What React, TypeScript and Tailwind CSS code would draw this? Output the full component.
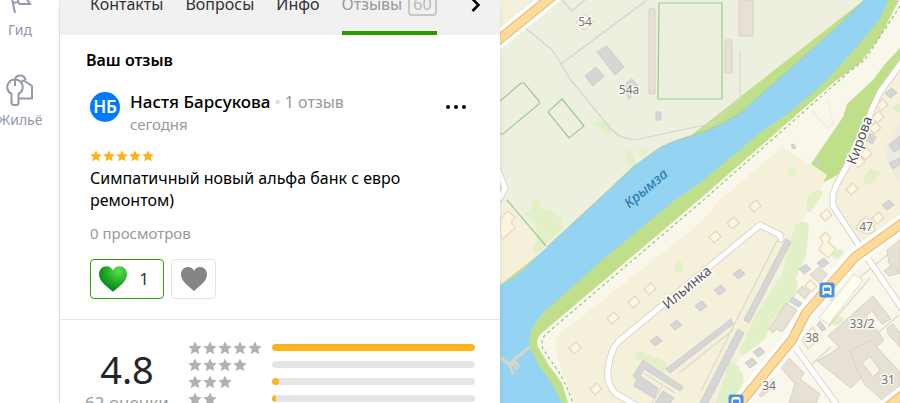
import React, { useState } from 'react';

const STAR_PATH = 'M12 1l3.500 7.200 8 .9-6 5.400 1.800 8.100L12 18.400l-7.300 4.200 1.800-8.100-6-5.400 8-.9z';
const HEART_PATH =
  'M15 26C11 22 2 17 2 9.500C2 5 5 2 9 2C11.800 2 14 3.600 15 6C16 3.600 18.200 2 21 2C25 2 28 5 28 9.500C28 17 19 22 15 26Z';

const tabs = [
  { label: 'Контакты' },
  { label: 'Вопросы' },
  { label: 'Инфо' },
  { label: 'Отзывы', count: 60 },
];

const ratings = [
  { stars: 5, share: 100 },
  { stars: 4, share: 0 },
  { stars: 3, share: 3.4 },
  { stars: 2, share: 2 },
];

const houses = [
  [150, 289], [134, 302], [113, 318], [75, 348], [96, 389],
  [215, 237], [233, 223], [255, 206], [352, 189], [326, 215],
  [382, 105], [378, 117], [375, 128], [366, 154], [359, 162], [378, 218],
];

const greySheds = [
  [239, 274], [220, 290], [201, 306], [176, 325], [156, 341],
  [305, 269], [323, 263], [391, 93], [388, 205], [251, 363], [259, 352],
];

const houseNumbers = [
  { text: '54', x: 85, y: 26 },
  { text: '54а', x: 129, y: 94 },
  { text: '47', x: 366, y: 231 },
  { text: '33/2', x: 362, y: 328 },
  { text: '38', x: 312, y: 342 },
  { text: '34', x: 269, y: 390 },
  { text: '31', x: 388, y: 384 },
];

const Stars: React.FC<{ count: number; className: string }> = ({ count, className }) => (
  <>
    {Array.from({ length: count }, (_, i) => (
      <svg key={i} viewBox="0 0 24 24" className={className} fill="currentColor" aria-hidden="true">
        <path d={STAR_PATH} />
      </svg>
    ))}
  </>
);

const Sidebar: React.FC = () => (
  <nav className="w-[60px] shrink-0 border-r border-[#ececec] bg-white text-[#9399ab]">
    <a href="#guide" className="flex w-10 flex-col items-center">
      <svg viewBox="0 0 32 16" className="h-4 w-8" fill="none" stroke="currentColor" strokeWidth="2" aria-hidden="true">
        <path d="M8 -1L11 13M9 3L14 2L16 4H26L22 -2M14 2V-2" />
      </svg>
      <span className="mt-1 text-sm leading-5">Гид</span>
    </a>
    <a href="#housing" className="mt-8 flex w-10 flex-col items-center">
      <svg viewBox="0 0 32 36" className="h-9 w-8" fill="none" stroke="currentColor" strokeWidth="2" strokeLinejoin="round" aria-hidden="true">
        <path d="M7.500 22A7.700 7.700 0 1 1 14.500 22V31Q14.500 33 12.500 33H10.500Q7.500 33 7.500 31ZM11 8V14M11 7A5.500 5.500 0 0 1 21.500 8M16 10.500L20 8.500L28 14V26.500H15" />
      </svg>
      <span className="text-sm leading-6">Жильё</span>
    </a>
  </nav>
);

const BusStop: React.FC<{ x: number; y: number }> = ({ x, y }) => (
  <g transform={`translate(${x} ${y})`}>
    <rect x="-7.500" y="-7.500" width="15" height="15" rx="3" fill="#4a90e2" />
    <path d="M-4.500 5V-2Q-4.500 -5 -2 -5H2Q4.500 -5 4.500 -2V5H2.500V3.500H-2.500V5Z" fill="#fff" />
    <path d="M-3 -2.500H3V1H-3Z" fill="#4a90e2" />
  </g>
);

const CityMap: React.FC = () => (
  <svg
    viewBox="0 0 400 403"
    preserveAspectRatio="xMinYMin slice"
    className="h-full w-full"
    role="img"
    aria-label="Карта"
    fontFamily="'Noto Sans', sans-serif"
  >
    <rect width="400" height="403" fill="#f9f7ea" />

    {/* park on the north bank */}
    <path d="M0 0H364L340 24L300 60L240 113L217 126L200 133L155 151L133 167L98 200L47 247L28 265L0 285Z" fill="#edf0df" />
    <path d="M0 0H30L0 28ZM0 197L8 203L47 247L28 265Q12 281 0 285Z" fill="#f5f0d9" />

    {/* residential blocks */}
    <path d="M282 147L327 175L323 183L313 200L297 230L270 300L243 353L230 373L217 403H75Q60 370 55 347Q54 339 60 334L200 223L220 200Z" fill="#f5f0d9" />
    <path d="M400 67L380 92L372 112L335 190V202L362 246L400 219Z" fill="#f5f0d9" />
    <path d="M400 123L388 145L385 153L392 172L400 182Z" fill="#edebdf" />

    {/* greenery */}
    <g fill="#e1f0c6">
      <path d="M94 124Q94 121 103 120Q113 123 111 133Q107 139 103 129Q94 128 94 124ZM126 153Q129 147 133 153L136 164L133 169Q127 164 126 153Z" />
      <circle cx="143" cy="152" r="4" />
      <path d="M32 200H40L41 209Q66 212 62 230Q48 240 43 248Q32 258 33 247Q41 237 34 222L24 214Q35 209 32 200Z" />
      <ellipse cx="179" cy="267" rx="4" ry="6" />
      <ellipse cx="292" cy="172" rx="4" ry="5" />
      <path d="M307 200Q308 192 317 190Q326 191 321 197L311 212H307Z" />
      <path d="M135 356Q138 347 152 357Q165 356 166 367Q167 374 160 370L145 360Q135 361 135 356Z" />
      <path d="M296 224Q304 220 309 224L308 239L306 255L296 278Q301 293 290 302L273 319L265 339Q250 351 242 356Q237 351 244 342L255 316L268 296L282 273L289 246Z" />
      <path d="M229 362Q238 362 240 370Q247 377 241 388L228 403H216Z" />
      <path d="M331 254Q341 246 344 251Q341 260 334 259ZM332 320Q343 313 344 319Q338 327 332 325Z" />
      <path d="M363 178L370 169Q378 169 380 175Q375 177 373 183Q365 188 363 178ZM392 107Q398 102 400 104V112Q394 113 392 107Z" />
    </g>
    <path d="M364 0H399L380 37L360 63L333 83L200 199L43 332Q35 338 38 347L50 367L62 383L68 403H0V285Z" fill="#c0df8a" />
    <path d="M400 48L385 64L373 80L347 104L343 117L311 164L327 175L323 183L339 174L372 105L400 65Z" fill="#c0df8a" />

    {/* river */}
    <path
      d="M364 0L340 24L300 60L240 113Q225 124 200 133Q165 143 155 151L133 167L98 200L47 247L28 265Q12 281 0 285V403H62Q53 383 40 367L30 347Q27 336 37 320Q45 310 60 298L100 262L175 200L200 183L260 133L290 112L325 82L360 43L380 19L388 0Z"
      fill="#95d3f3"
    />
    <path d="M364 0L340 24L300 60L240 113Q225 124 200 133Q165 143 155 151L133 167L98 200L47 247" fill="none" stroke="#a8cf9b" strokeWidth="1" />
    <path d="M0 357L9 364L30 347M9 364L13 374M12 363L17 370M15 361L19 367" fill="none" stroke="#d8d5c8" strokeWidth="3" />

    {/* embankment walk */}
    <path d="M400 6L366 58Q360 64 350 71L200 203L46 334Q40 340 43 349L60 374L68 390L73 403" fill="none" stroke="#8dc389" strokeWidth="1.200" strokeDasharray="3 3" />

    {/* sports grounds and paths */}
    <g fill="none" stroke="#9acb90" strokeWidth="1.200">
      <path d="M159 3H222V99H158ZM0 101L21 83H24L39 101V104L3 134H0M62 99L84 126L69 138L48 112ZM7 200L46 246" />
    </g>
    <g fill="none" stroke="#d5d5d0" strokeWidth="1.200">
      <path d="M24 27L50 48Q55 53 61 64L70 79L110 128Q123 142 139 139L200 126Q210 126 220 118L240 98V51M61 64L147 0M62 0L72 11L85 0" />
      <path d="M279 237L233 327L201 391M179 373L233 330M370 278L328 327M330 301L400 245M312 364L331 347M365 344L399 315M144 373L175 393M162 386L152 403" stroke="#ddd9c8" />
      <path d="M312 111L327 128L333 124L328 99" stroke="#f0f1dd" strokeWidth="2" />
    </g>

    {/* large buildings */}
    <g fill="#e7e1d5" stroke="#d8d0c3" strokeWidth="1">
      <path d="M149 9H155V94H149ZM239 0H253V36H239ZM225 40H232V73H225Z" />
      <path d="M319 267L327 274L320 284L310 275ZM302 286L310 292L305 299L297 292ZM286 303L297 310L282 332L276 329L273 333L269 329Z" />
      <path d="M373 296L391 319L382 324L372 311L366 316L384 340L370 353L363 346L350 357L365 374L351 388L317 361L333 352L339 347L328 336Z" />
      <path d="M350 351L370 340L400 372V403H386L365 385L358 372ZM278 364L286 355L304 373L300 379L320 394L316 403H289L295 384ZM400 240L387 250L389 263L400 273ZM384 271L393 264L400 273L389 276ZM387 328L393 324L400 333V347L388 334ZM256 390L270 378L276 385L261 397Z" />
    </g>
    <path d="M362 363L370 356L380 370L373 377Z" fill="#f7f5e7" stroke="#d8d0c3" />
    <path d="M354 274L363 280L329 324L319 318Z" fill="#fffdf0" stroke="#e2dcca" />

    <g fill="#d6d6d6" stroke="#cdcdcd" strokeWidth="1">
      <path d="M97 52L107 46L124 67L115 75ZM85 76L96 67L104 76L93 86ZM123 86L132 79L138 86L129 99ZM156 112H161V120H156Z" />
      <path d="M286 239L291 242L249 323L244 320ZM238 329L244 333L208 403H200ZM231 319L233 324L170 373L166 369ZM143 360L183 387L180 391L144 369L140 376L158 388L154 398L134 386L137 379L133 376ZM163 391L174 398L170 403H155Z" />
      <path d="M292 297L302 303L299 307L290 302ZM366 140L370 133L376 137L372 144ZM389 145L400 136V148L394 152ZM389 163L400 158V164L393 169ZM320 321L326 329L322 331L317 325ZM291 145L294 144L296 148L293 149ZM316 163L319 160L320 164L317 166Z" />
      {greySheds.map(([x, y]) => (
        <path key={`${x}-${y}`} d={`M${x - 6} ${y}L${x + 1} ${y - 5}L${x + 6} ${y}L${x - 1} ${y + 5}Z`} />
      ))}
    </g>
    <g fill="#fdf5df" stroke="#e4d8be" strokeWidth="1.200">
      {houses.map(([x, y]) => (
        <path key={`${x}-${y}`} d={`M${x - 6} ${y}L${x + 1} ${y - 6}L${x + 6} ${y}L${x - 1} ${y + 6}Z`} />
      ))}
      <path d="M320 238L325 232L331 238L328 242L336 249L328 258L319 250L323 242ZM0 219L8 211L15 217L11 222L15 228L3 239L0 235ZM305 286L310 280L317 286L312 292ZM359 223L366 217L373 222L375 231L367 234L356 229ZM76 22L85 14L94 22L84 30ZM302 339L313 327L319 338L308 349Z" />
    </g>

    {/* streets: casing, then surface */}
    <g fill="none" strokeLinejoin="round" strokeLinecap="round">
      <g stroke="#d9d6cf" strokeWidth="7">
        <path d="M135 405L115 393Q106 382 108 370Q110 350 119 341L260 225L280 235L281 239" />
        <path d="M402 62L380 92L373 107L358 145L337 184L333 194V206L360 247L403 310M293 344L337 405" />
        <path d="M-2 170L5 188L0 198" />
      </g>
      <g stroke="#fff" strokeWidth="5">
        <path d="M135 405L115 393Q106 382 108 370Q110 350 119 341L260 225L280 235L281 239" />
        <path d="M402 62L380 92L373 107L358 145L337 184L333 194V206L360 247L403 310M293 344L337 405" />
        <path d="M-2 170L5 188L0 198" />
      </g>
      <g stroke="#fff" strokeWidth="17">
        <path d="M-4 42L54 -5M238 406L292 340L306 313L355 257L365 250L404 222M386 408L404 394" />
      </g>
      <g stroke="#efb273" strokeWidth="10">
        <path d="M-4 42L54 -5M238 406L292 340L306 313L355 257L365 250L404 222M386 408L404 394" />
      </g>
      <g stroke="#fddc9a" strokeWidth="8">
        <path d="M-4 42L54 -5M238 406L292 340L306 313L355 257L365 250L404 222M386 408L404 394" />
      </g>
    </g>

    <BusStop x={327} y={290} />
    <BusStop x={236} y={402} />

    <g textAnchor="middle" stroke="#fff" strokeWidth="3" strokeLinejoin="round" paintOrder="stroke">
      <g fontSize="12" fill="#777" strokeOpacity="0.700">
        {houseNumbers.map(({ text, x, y }) => (
          <text key={text} x={x} y={y}>{text}</text>
        ))}
      </g>
      <g fontSize="14" fill="#555">
        <text transform="translate(190 291) rotate(-40)">Ильинка</text>
        <text transform="translate(364 142) rotate(-70)">Кирова</text>
      </g>
      <text transform="translate(149 192) rotate(-40)" fontSize="14" fontStyle="italic" fontWeight="500" fill="#2a7fb0" stroke="none">Крымза</text>
    </g>
  </svg>
);

const TabBar: React.FC<{ active: string; onSelect: (label: string) => void }> = ({ active, onSelect }) => (
  <div className="flex h-[35px] items-start bg-[#f1f1f1] pl-[30px] pr-5 text-base">
    <div role="tablist" className="flex h-full gap-[22px]">
      {tabs.map(({ label, count }) => (
        <button
          key={label}
          type="button"
          role="tab"
          aria-selected={active === label}
          onClick={() => onSelect(label)}
          className={`flex h-full items-start border-b-4 ${
            active === label ? 'border-[#2b9800] text-[#999]' : 'border-transparent text-[#333]'
          }`}
        >
          <span className="-mt-2 leading-6">{label}</span>
          {count && (
            <span className="-mt-2 ml-1.5 rounded border-2 border-[#c8c8c8] px-[3px] leading-5 text-[#b8b8b8]">{count}</span>
          )}
        </button>
      ))}
    </div>
    <button type="button" aria-label="Дальше" className="ml-auto">
      <svg viewBox="0 0 10 12" className="h-3 w-2.5" fill="none" stroke="#000" strokeWidth="2.500" aria-hidden="true">
        <path d="M2.500 -1L8.500 5L2.500 11" />
      </svg>
    </button>
  </div>
);

const Review: React.FC = () => {
  const [reaction, setReaction] = useState<'green' | 'grey'>('green');

  return (
    <section className="border-b border-[#e5e5e5] pb-5 pl-[30px] pr-8 pt-[13px]">
      <h2 className="-ml-1 text-base font-semibold leading-6 text-black">Ваш отзыв</h2>
      <div className="mt-[18px] flex items-start">
        <div className="mt-0.5 flex h-[30px] w-[30px] items-center justify-center rounded-full bg-[#007aff] text-[17px] font-semibold leading-6 text-white">
          НБ
        </div>
        <div className="ml-2.5">
          <div className="text-[17px] leading-6">
            <span className="font-medium text-black">Настя Барсукова</span>
            <span className="mx-1 text-[#ddd]">•</span>
            <span className="text-base leading-6 text-[#999]">1 отзыв</span>
          </div>
          <div className="text-[15px] leading-5 text-[#999]">сегодня</div>
        </div>
        <button type="button" aria-label="Ещё" className="ml-auto mt-[13px] flex gap-1 p-0.5">
          <span className="h-1 w-1 rounded-full bg-black" />
          <span className="h-1 w-1 rounded-full bg-black" />
          <span className="h-1 w-1 rounded-full bg-black" />
        </button>
      </div>
      <div className="mt-4 flex gap-px text-[#ffb31a]" role="img" aria-label="Оценка 5 из 5">
        <Stars count={5} className="h-3 w-3" />
      </div>
      <p className="mt-[5px] text-base leading-[22px] text-black">Симпатичный новый альфа банк с евро ремонтом)</p>
      <p className="mt-3 text-[15px] leading-5 text-[#999]">0 просмотров</p>
      <div className="mt-4 flex gap-[7px]">
        <button
          type="button"
          aria-pressed={reaction === 'green'}
          onClick={() => setReaction('green')}
          className="flex h-10 w-[74px] items-center justify-between rounded border border-[#2fa500] pl-[7px] pr-3.5 text-[17px] text-[#333]"
        >
          <svg viewBox="1 1 28 26" className="h-7 w-[30px]" aria-hidden="true">
            <defs>
              <radialGradient id="heart" cx="0.700" cy="0.200" r="0.800">
                <stop offset="0" stopColor="#58e04f" />
                <stop offset="0.500" stopColor="#25b324" />
                <stop offset="1" stopColor="#077e22" />
              </radialGradient>
            </defs>
            <path d={HEART_PATH} fill="url(#heart)" />
          </svg>
          1
        </button>
        <button
          type="button"
          aria-label="Нравится"
          aria-pressed={reaction === 'grey'}
          onClick={() => setReaction('grey')}
          className="flex h-10 w-[45px] items-center justify-center rounded border border-[#e3e3e3]"
        >
          <svg viewBox="1 1 28 26" className="h-[26px] w-7" fill="#858585" aria-hidden="true">
            <path d={HEART_PATH} />
          </svg>
        </button>
      </div>
    </section>
  );
};

const RatingSummary: React.FC = () => (
  <section className="flex pl-5 pr-[25px] pt-[19px]">
    <div className="w-[94px] text-center">
      <div className="pt-[7px] text-[38px] leading-[46px] text-[#262626]">4.8</div>
      <div className="whitespace-nowrap text-[17px] leading-[22px] text-[#999]">62 оценки</div>
    </div>
    <ul className="ml-3.5 flex-1">
      {ratings.map(({ stars, share }) => (
        <li key={stars} className="flex h-[17px] items-center">
          <div className="flex w-[84px] gap-px text-[#b1b1b1]">
            <Stars count={stars} className="h-3.5 w-3.5" />
          </div>
          <div className="h-[7px] flex-1 overflow-hidden rounded bg-[#e5e5e5]">
            <div className="h-full rounded bg-[#ffb31a]" style={{ width: `${share}%` }} />
          </div>
        </li>
      ))}
    </ul>
  </section>
);

export default function App() {
  const [activeTab, setActiveTab] = useState('Отзывы');

  return (
    <div className="flex h-screen overflow-hidden bg-white font-['Noto_Sans',sans-serif]">
      <Sidebar />
      <main className="relative z-10 w-[440px] shrink-0 overflow-hidden bg-white shadow-md">
        <TabBar active={activeTab} onSelect={setActiveTab} />
        <Review />
        <RatingSummary />
      </main>
      <div className="min-w-0 flex-1">
        <CityMap />
      </div>
    </div>
  );
}
